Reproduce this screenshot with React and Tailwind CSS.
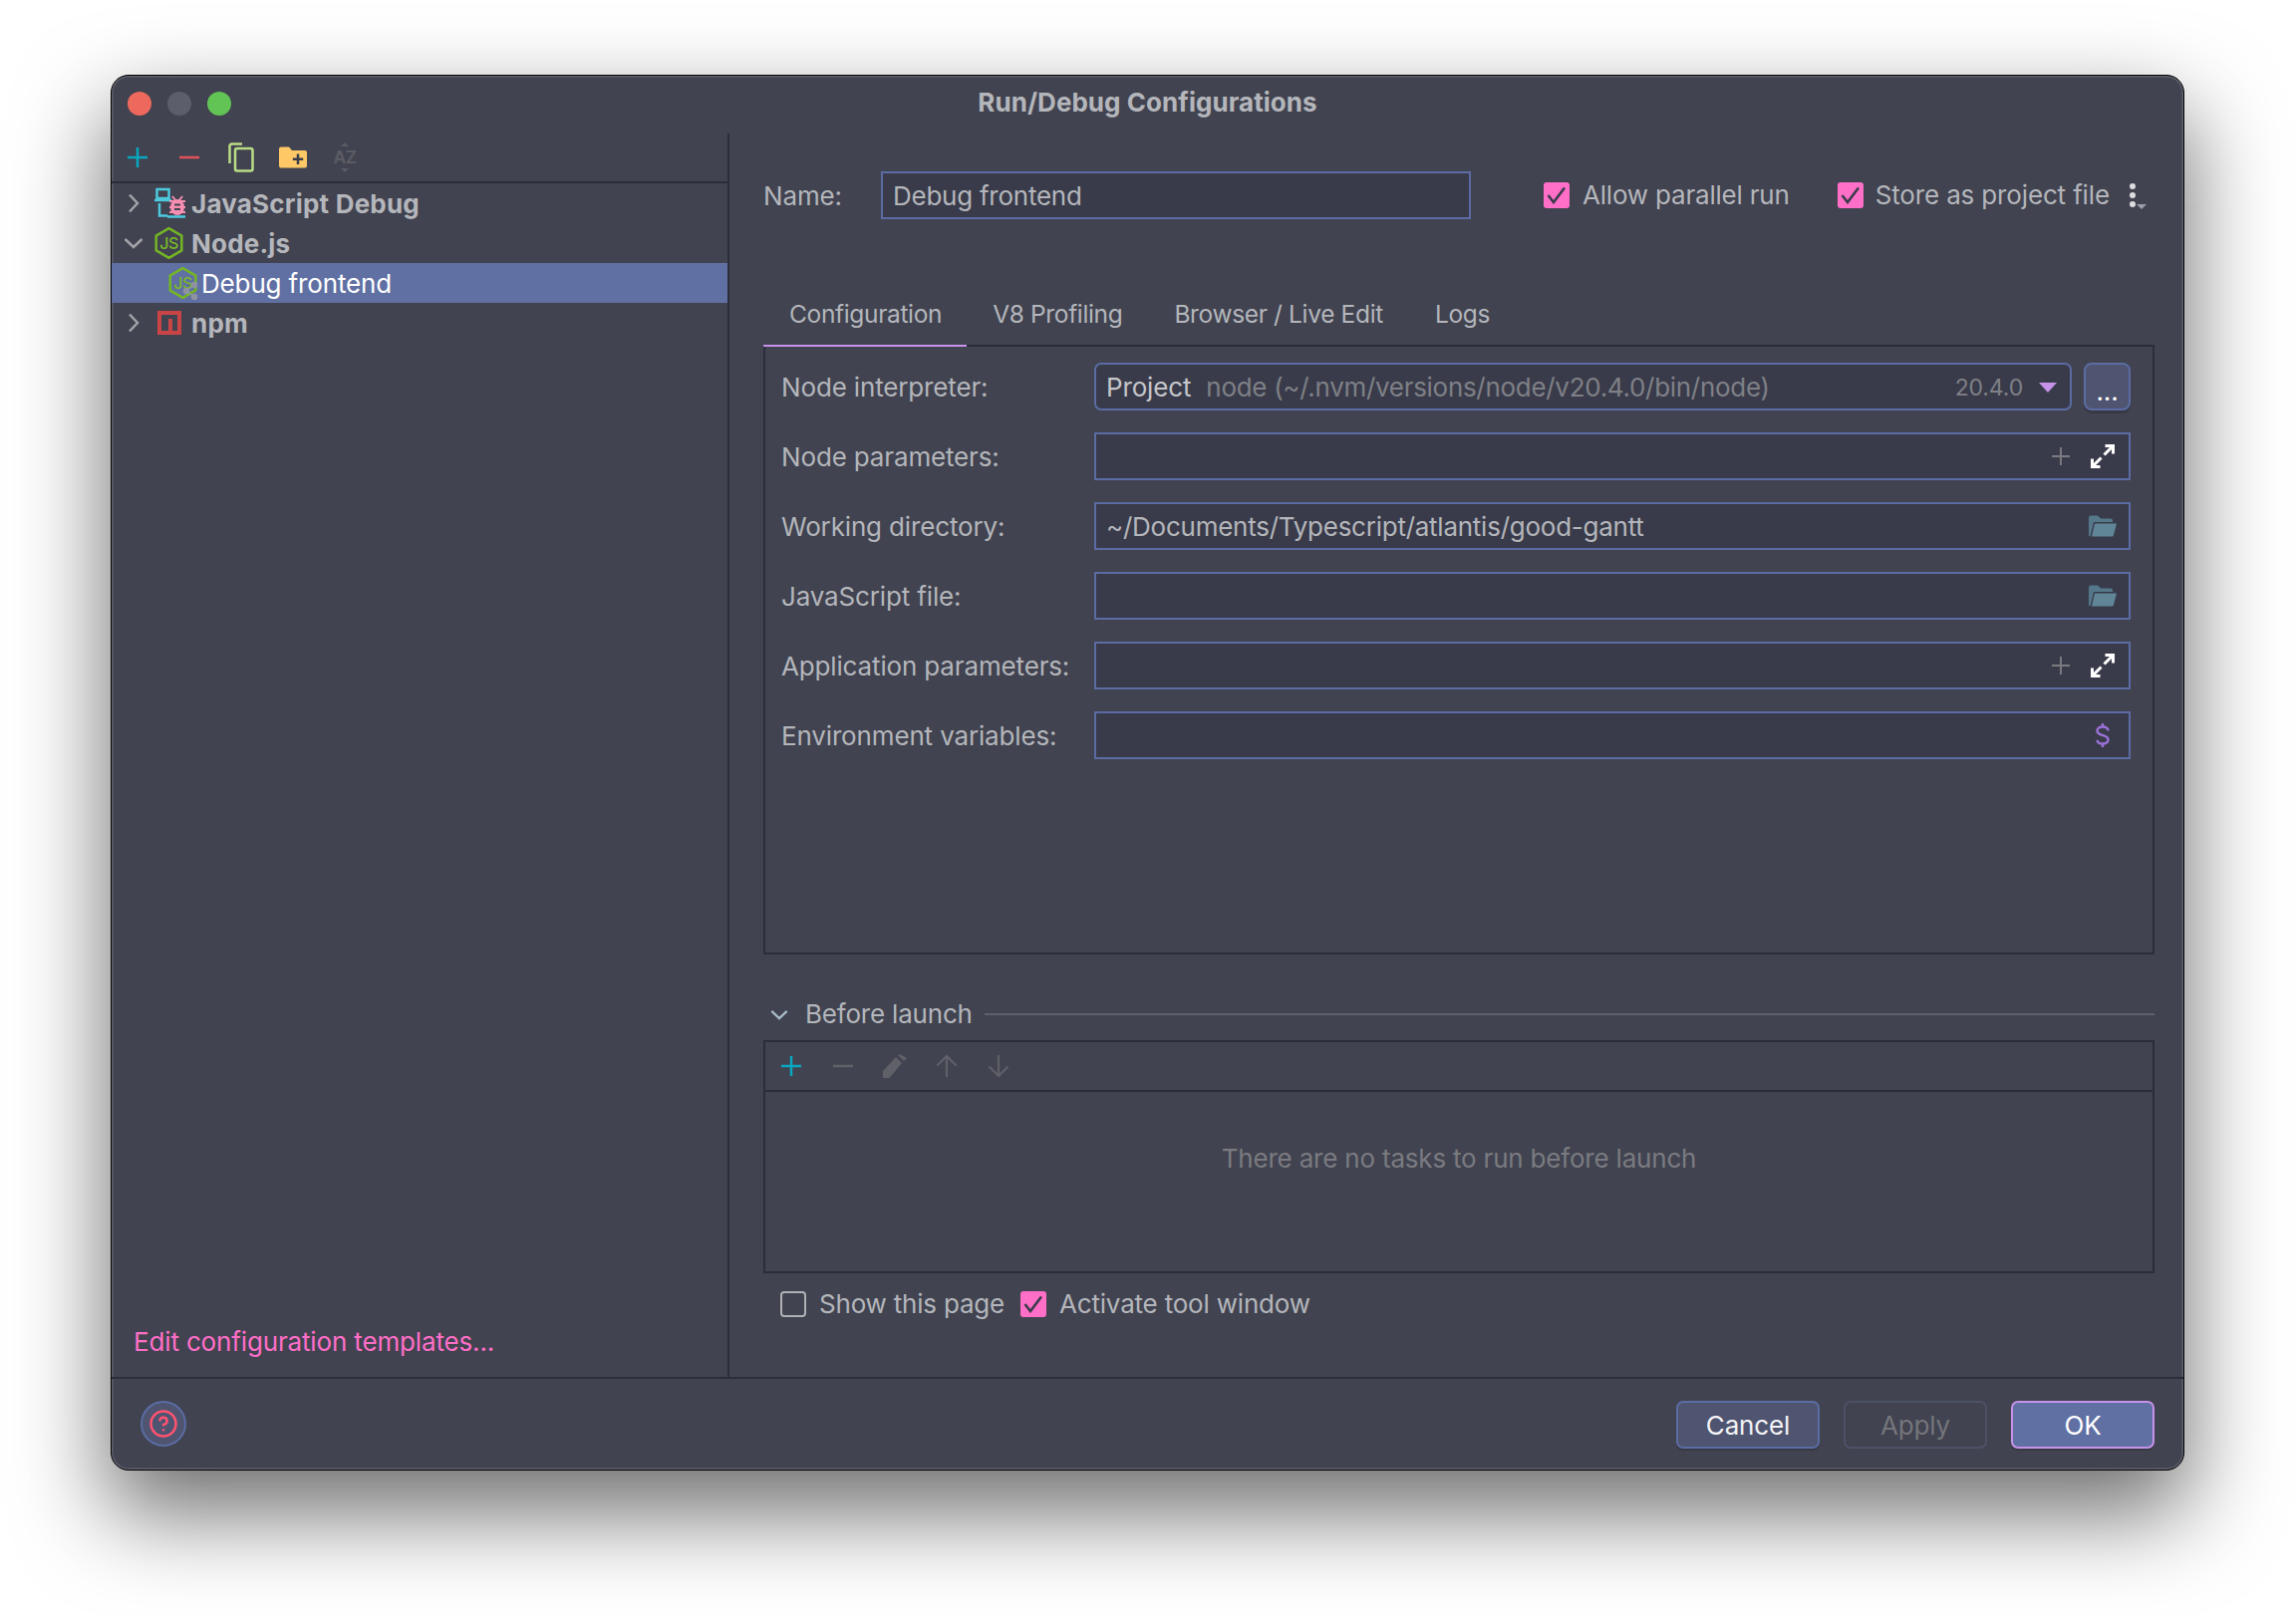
import React from "react";
import { CircleHelp } from "lucide-react";

const Plus = ({ color = "#0aa6bf", s = 20, w = 2.5 }) => (
  <svg width={s} height={s} viewBox="0 0 20 20" fill="none" stroke={color} strokeWidth={w}>
    <path d="M10 0V20M0 10H20" />
  </svg>
);
const Minus = ({ color = "#e0525a", s = 20, w = 2.5 }) => (
  <svg width={s} height={s} viewBox="0 0 20 20" fill="none" stroke={color} strokeWidth={w}>
    <path d="M0 10H20" />
  </svg>
);
const Copy = () => (
  <svg width="26" height="30" viewBox="0 0 26 30" fill="none" stroke="#b9dc84" strokeWidth="2.5">
    <rect x="7" y="6" width="17.5" height="22.5" rx="2" />
    <path d="M14 1.5H3.5A2 2 0 0 0 1.5 3.5V21" />
  </svg>
);
const FolderPlus = () => (
  <svg width="28" height="22" viewBox="0 0 28 22">
    <path d="M0 2.5A2 2 0 0 1 2 .5H10L13 4H26A2 2 0 0 1 28 6V19.5A2 2 0 0 1 26 21.5H2A2 2 0 0 1 0 19.5Z" fill="#ffc866" />
    <path d="M19 7.5V18M13.8 12.8H24.2" stroke="#393b4a" strokeWidth="2.5" />
  </svg>
);
const AZ = () => (
  <svg width="26" height="30" viewBox="0 0 26 30">
    <path d="M13 0L17 4H9ZM13 30L17 26H9Z" fill="#5a5b63" />
    <text x="13" y="21" textAnchor="middle" fontFamily="Inter" fontWeight="700" fontSize="17" letterSpacing="-0.5" fill="#5a5b63">AZ</text>
  </svg>
);
const ChevR = () => (
  <svg width="12" height="20" viewBox="0 0 12 20" fill="none" stroke="#a3a4a9" strokeWidth="2.5">
    <path d="M2 1.5L10 10L2 18.5" />
  </svg>
);
const ChevD = ({ color = "#a3a4a9", w = 20, h = 12 }) => (
  <svg width={w} height={h} viewBox="0 0 20 12" fill="none" stroke={color} strokeWidth="2.5">
    <path d="M1.5 2L10 10L18.5 2" />
  </svg>
);
const JsDebug = () => (
  <svg width="33" height="32" viewBox="0 0 33 32" fill="none">
    <rect x="2.5" y="2" width="12" height="9" stroke="#4dc9de" strokeWidth="2.5" />
    <path d="M0 13H17M5 16V28.5H13M13 29.5H31" stroke="#4dc9de" strokeWidth="2.5" />
    <path d="M15 14H31M15 20H31M15 25H31M18 9L21 13M28 9L25 13" stroke="#f78fb3" strokeWidth="2" />
    <ellipse cx="23" cy="20" rx="7" ry="8" fill="#f78fb3" />
    <path d="M20 17.5H26M20 22H26" stroke="#414350" strokeWidth="2" />
  </svg>
);
const NodeIcon = ({ badge }) => (
  <svg width="30" height="33" viewBox="0 0 30 33" fill="none">
    <path d="M14.5 1.2L27.3 8.6V23.4L14.5 30.8L1.7 23.4V8.6Z" stroke="#74b624" strokeWidth="2.5" strokeLinejoin="round" />
    <text x="14.5" y="21.5" textAnchor="middle" fontFamily="Inter" fontWeight="500" fontSize="16" letterSpacing="-0.5" fill="#7ab827">JS</text>
    {badge && (
      <g stroke="#8f93a0" strokeWidth="1.5" fill="#8f93a0">
        <path d="M18 24L26 18M18 24L26 30" />
        <circle cx="18" cy="24" r="2.5" />
        <circle cx="26" cy="18" r="2.5" />
        <circle cx="26" cy="30" r="2.5" />
      </g>
    )}
  </svg>
);
const Npm = () => (
  <svg width="24" height="24" viewBox="0 0 24 24">
    <path d="M0 0H24V24H0Z" fill="#c94545" />
    <path d="M4 4H20V20H15V8H11V20H4Z" fill="#414350" />
  </svg>
);
const Expand = () => (
  <svg width="24" height="24" viewBox="0 0 24 24" fill="none" stroke="#ffffff" strokeWidth="3">
    <path d="M14.5 1.5H22.5V9.5M22.5 1.5L13.5 10.5M1.5 14.5V22.5H9.5M1.5 22.5L10.5 13.5" />
  </svg>
);
const FolderOpen = () => (
  <svg width="28" height="22" viewBox="0 0 28 22">
    <path d="M0 2.5A2 2 0 0 1 2 .5H9L12 3.5H22A2 2 0 0 1 24 5.5V7H5L1.5 21.5A2 2 0 0 1 0 19.5Z" fill="#54788a" />
    <path d="M6 8.5H28L25 20A2 2 0 0 1 23 21.5H3Z" fill="#5f8597" />
  </svg>
);
const Dollar = () => (
  <svg width="16" height="24" viewBox="0 0 16 24" fill="none" stroke="#9b70d8" strokeWidth="2.5">
    <path d="M8 0V3.5M8 20.5V24" />
    <path d="M13.5 7.5C13.5 5 11 3.5 8 3.5C5 3.5 2.5 5 2.5 7.5C2.5 10.5 5.5 11.2 8 12C10.5 12.8 13.5 13.5 13.5 16.5C13.5 19 11 20.5 8 20.5C5 20.5 2.8 19.2 2.5 16.8" />
  </svg>
);
const Pencil = () => (
  <svg width="24" height="24" viewBox="0 0 24 24" fill="#5f6068">
    <path d="M0 24V17L13 3L19 9L6.5 24Z" />
    <path d="M15 1L17 0L24 4L21 7Z" />
  </svg>
);
const Arrow = ({ down }) => (
  <svg width="22" height="22" viewBox="0 0 22 22" fill="none" stroke="#5f6068" strokeWidth="2.2">
    {down ? <path d="M11 0V21M1.5 11.5L11 21L20.5 11.5" /> : <path d="M11 22V1M1.5 10.5L11 1L20.5 10.5" />}
  </svg>
);

const Check = ({ on = true }) =>
  on ? (
    <span className="flex h-[26px] w-[26px] shrink-0 items-center justify-center rounded-[3px] bg-[#ff6ec7]">
      <svg width="20" height="18" viewBox="0 0 20 18" fill="none" stroke="#393b4a" strokeWidth="2.6">
        <path d="M1.5 9L7 16L18 1.5" />
      </svg>
    </span>
  ) : (
    <span className="block h-[26px] w-[26px] shrink-0 rounded-[4px] border-[2.5px] border-[#b0b1b5]" />
  );

const fieldCls =
  "flex h-[48px] items-center border-2 border-[#5a6ca3] bg-[#393b4a] pl-[10px] pr-[12px]";

const Field = ({ label, children, text }) => (
  <div className="flex h-[48px] items-center">
    <div className="w-[314px] shrink-0 pt-[2px]">{label}</div>
    <div className={`${fieldCls} flex-1`}>
      <span className="flex-1 pt-[1px] tracking-[-0.25px]">{text}</span>
      {children}
    </div>
  </div>
);

const PlusExpand = () => (
  <div className="flex items-center gap-[21px] pr-[2px]">
    <Plus color="#7a7b80" s={18} w={2.2} />
    <Expand />
  </div>
);

const Tree = ({ chev, icon, children, selected, nested }) => (
  <div className={`flex h-[40px] items-center ${selected ? "bg-[#6070a3] text-[#ffffff]" : "font-bold tracking-[0.2px]"}`}>
    {nested ? (
      <div className="ml-[57px] mr-[3px] w-[30px]">{icon}</div>
    ) : (
      <>
        <div className="ml-[10px] flex w-[24px] justify-center">{chev}</div>
        <div className="ml-[9px] w-[37px]">{icon}</div>
      </>
    )}
    <span className="pt-[2px]">{children}</span>
  </div>
);

const Btn = ({ children, cls }) => (
  <div className={`flex h-[48px] w-[144px] items-center justify-center rounded-[7px] border-2 pt-[1px] ${cls}`}>{children}</div>
);

export default function App() {
  return (
    <div className="h-[1624px] w-[2304px] overflow-hidden bg-white pl-[111px] pt-[75px] font-['Inter',sans-serif] text-[26px] leading-[32px] tracking-[-0.15px] text-[#b4b6bb]">
      <div className="flex h-[1401px] w-[2081px] flex-col rounded-[18px] border border-black bg-[#414350] shadow-[0_40px_90px_4px_rgba(0,0,0,0.56),inset_0_0_0_1.5px_#5f616e]">
        {/* title bar */}
        <div className="grid h-[58px] shrink-0 grid-cols-[1fr_auto_1fr] items-center pb-[2px]">
          <div className="flex gap-[16px] pl-[16px]">
            <span className="h-[24px] w-[24px] rounded-full bg-[#ee695d]" />
            <span className="h-[24px] w-[24px] rounded-full bg-[#5c5e6b]" />
            <span className="h-[24px] w-[24px] rounded-full bg-[#61c454]" />
          </div>
          <div className="pb-[2px] font-bold tracking-[0.05px]">Run/Debug Configurations</div>
          <div />
        </div>

        <div className="flex min-h-0 flex-1">
          {/* sidebar */}
          <div className="flex w-[620px] shrink-0 flex-col border-r-2 border-[#2b2d3a]">
            <div className="flex h-[50px] shrink-0 items-center border-b-2 border-[#2b2d3a]">
              {[<Plus key="p" />, <Minus key="m" />, <Copy key="c" />, <FolderPlus key="f" />, <AZ key="a" />].map((ic, i) => (
                <div key={i} className="flex w-[52px] justify-center">{ic}</div>
              ))}
            </div>
            <Tree chev={<ChevR />} icon={<JsDebug />}>JavaScript Debug</Tree>
            <Tree chev={<ChevD />} icon={<NodeIcon />}>Node.js</Tree>
            <Tree selected nested icon={<NodeIcon badge />}>Debug frontend</Tree>
            <Tree chev={<ChevR />} icon={<div className="pl-[3px]"><Npm /></div>}>npm</Tree>
            <div className="mt-auto pb-[19px] pl-[22px] text-[#ff6ec7]">Edit configuration templates...</div>
          </div>

          {/* main panel */}
          <div className="flex min-w-0 flex-1 flex-col pl-[34px] pr-[29px] pt-[38px]">
            <div className="flex h-[48px] shrink-0 items-center">
              <div className="w-[118px] pt-[1px]">Name:</div>
              <div className={`${fieldCls} w-[592px]`}><span className="pt-[1px] tracking-[-0.25px]">Debug frontend</span></div>
              <div className="ml-[73px] flex items-center gap-[13px]"><Check /><span className="tracking-[-0.2px]">Allow parallel run</span></div>
              <div className="ml-[48px] flex items-center gap-[12px]"><Check /><span>Store as project file</span></div>
              <div className="relative ml-[20px] flex h-[24px] w-[6px] flex-col justify-between">
                <span className="h-[6px] w-[6px] rounded-full bg-[#dcdde0]" />
                <span className="h-[6px] w-[6px] rounded-full bg-[#dcdde0]" />
                <span className="h-[6px] w-[6px] rounded-full bg-[#dcdde0]" />
                <svg className="absolute left-[7px] top-[21px]" width="10" height="5" viewBox="0 0 10 5"><path d="M0 0H10L5 5Z" fill="#9aa0ab" /></svg>
              </div>
            </div>

            {/* tabs */}
            <div className="mt-[78px] flex h-[50px] shrink-0 items-center text-[24.5px] tracking-[-0.35px]">
              <div className="flex h-full items-center border-b-2 border-[#c792ea] pl-[26px] pr-[25px]"><span className="pb-[14px]">Configuration</span></div>
              {["V8 Profiling", "Browser / Live Edit", "Logs"].map((t) => (
                <div key={t} className="flex h-full items-center border-b-2 border-[#2b2d3a] px-[26px]"><span className="pb-[14px]">{t}</span></div>
              ))}
              <div className="h-full flex-1 border-b-2 border-[#2b2d3a]" />
            </div>
            <div className="flex h-[610px] shrink-0 flex-col gap-[22px] border-x-2 border-b-2 border-[#2b2d3a] pl-[16px] pr-[22px] pt-[16px]">
              <div className="flex h-[48px] items-center">
                <div className="w-[314px] shrink-0 pt-[2px]">Node interpreter:</div>
                <div className="flex h-[48px] flex-1 items-center rounded-[7px] border-2 border-[#5a6ca3] bg-[#393b4a] pl-[10px] pr-[13px] pt-[1px]">
                  <span className="text-[#c5c6ca]">Project</span>
                  <span className="ml-[15px] flex-1 tracking-[-0.3px] text-[#7f8086]">node (~/.nvm/versions/node/v20.4.0/bin/node)</span>
                  <span className="text-[23px] text-[#7f8086]">20.4.0</span>
                  <svg className="ml-[16px]" width="18" height="10" viewBox="0 0 18 10"><path d="M0 0H18L9 10Z" fill="#c792ea" /></svg>
                </div>
                <div className="ml-[12px] flex h-[48px] w-[47px] items-end justify-center rounded-[8px] border-2 border-[#5a6ca3] bg-[#4f5470] pb-[7px] leading-[20px] text-[#ffffff] shadow-[0_3px_0_rgba(0,0,0,0.15)]">...</div>
              </div>
              <Field label="Node parameters:"><PlusExpand /></Field>
              <Field label="Working directory:" text="~/Documents/Typescript/atlantis/good-gantt"><FolderOpen /></Field>
              <Field label="JavaScript file:"><FolderOpen /></Field>
              <Field label="Application parameters:"><PlusExpand /></Field>
              <Field label="Environment variables:">
                <div className="pr-[6px]"><Dollar /></div>
              </Field>
            </div>

            {/* before launch */}
            <div className="mt-[34px] flex h-[52px] shrink-0 items-center pl-[7px]">
              <ChevD color="#a9bcc9" w={18} h={11} />
              <span className="ml-[17px] tracking-[-0.2px]">Before launch</span>
              <div className="ml-[12px] h-[2px] flex-1 bg-[#5e606d]" />
            </div>
            <div className="h-[234px] shrink-0 border-2 border-[#2b2d3a]">
              <div className="flex h-[50px] items-center border-b-2 border-[#2b2d3a]">
                {[<Plus key="p" />, <Minus key="m" color="#5f6068" />, <Pencil key="e" />, <Arrow key="u" />, <Arrow key="d" down />].map((ic, i) => (
                  <div key={i} className="flex w-[52px] justify-center">{ic}</div>
                ))}
              </div>
              <div className="pt-[51px] text-center tracking-[-0.2px] text-[#7a7b80]">There are no tasks to run before launch</div>
            </div>
            <div className="mt-[17px] flex h-[28px] shrink-0 items-center pl-[17px]">
              <Check on={false} />
              <span className="ml-[13px] tracking-[-0.2px]">Show this page</span>
              <span className="ml-[16px]"><Check /></span>
              <span className="ml-[13px] tracking-[-0.2px]">Activate tool window</span>
            </div>
          </div>
        </div>

        {/* footer */}
        <div className="flex h-[93px] shrink-0 items-start justify-between border-t-2 border-[#2b2d3a] pl-[29px] pr-[29px] pt-[22px]">
          <div className="flex h-[46px] w-[46px] items-center justify-center rounded-full border-2 border-[#5a6ca3] bg-[#4f5470]">
            <CircleHelp size={30} color="#ff5370" strokeWidth={2} />
          </div>
          <div className="flex gap-[24px]">
            <Btn cls="border-[#5a6ca3] bg-[#4f5470] text-[#f4f4f6] shadow-[0_2px_0_rgba(0,0,0,0.15)]">Cancel</Btn>
            <Btn cls="border-[#4d5168] text-[#74757b]">Apply</Btn>
            <Btn cls="border-[#c792ea] bg-[#6070a3] text-[#ffffff] shadow-[0_2px_0_rgba(0,0,0,0.15)]">OK</Btn>
          </div>
        </div>
      </div>
    </div>
  );
}
